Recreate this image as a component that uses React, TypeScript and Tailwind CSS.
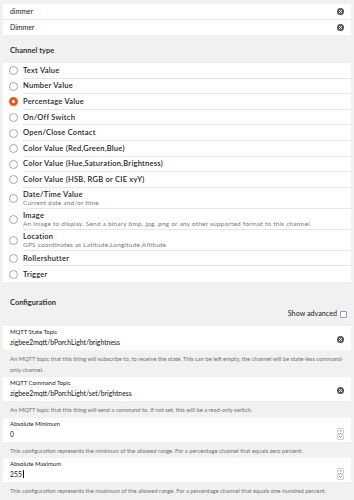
import React from 'react';

const channelTypes: { label: string; sub?: string; checked?: boolean }[] = [
  { label: 'Text Value' },
  { label: 'Number Value' },
  { label: 'Percentage Value', checked: true },
  { label: 'On/Off Switch' },
  { label: 'Open/Close Contact' },
  { label: 'Color Value (Red,Green,Blue)' },
  { label: 'Color Value (Hue,Saturation,Brightness)' },
  { label: 'Color Value (HSB, RGB or CIE xyY)' },
  { label: 'Date/Time Value', sub: 'Current date and/or time' },
  {
    label: 'Image',
    sub: 'An image to display. Send a binary bmp, jpg, png or any other supported format to this channel.',
  },
  { label: 'Location', sub: 'GPS coordinates as Latitude,Longitude,Altitude' },
  { label: 'Rollershutter' },
  { label: 'Trigger' },
];

function ClearIcon() {
  return (
    <svg width="7" height="7" viewBox="0 0 14 14" className="shrink-0">
      <circle cx="7" cy="7" r="7" fill="#555" />
      <path d="M4.5 4.5l5 5M9.5 4.5l-5 5" stroke="#fff" strokeWidth="1.8" strokeLinecap="round" />
    </svg>
  );
}

function Spinner() {
  return (
    <svg width="7" height="12" viewBox="0 0 14 24" className="shrink-0">
      <rect x="0.75" y="0.75" width="12.5" height="10.5" rx="2.5" fill="none" stroke="#aaa" strokeWidth="1.3" />
      <rect x="0.75" y="12.75" width="12.5" height="10.5" rx="2.5" fill="none" stroke="#aaa" strokeWidth="1.3" />
      <path d="M4.5 7.2L7 4.2l2.5 3" fill="none" stroke="#666" strokeWidth="1.4" />
      <path d="M4.5 16.2L7 19.2l2.5-3" fill="none" stroke="#666" strokeWidth="1.4" />
    </svg>
  );
}

function Radio({ checked }: { checked?: boolean }) {
  if (checked) {
    return <span className="block w-[9px] h-[9px] rounded-full border-[3px] border-[#ee5522] bg-white" />;
  }
  return <span className="block w-[9px] h-[9px] rounded-full border border-[#a8a8a8] bg-white" />;
}

function ConfigField({
  label,
  value,
  desc,
  number,
  cursor,
}: {
  label: string;
  value: string;
  desc: string[];
  number?: boolean;
  cursor?: boolean;
}) {
  return (
    <div>
      <div className="mx-[3px] h-[24px] bg-white pl-[7px] pr-[7px] pt-[2px] flex items-start">
        <div className="flex-1 min-w-0">
          <div className="text-[6px] leading-[8px] text-[#222]">{label}</div>
          <div className="text-[6.8px] leading-[12px] text-[#111] flex items-center">
            {value}
            {cursor && <span className="inline-block w-px h-[8px] bg-[#111] ml-px" />}
          </div>
        </div>
        <div className="pt-[8px]">{number ? <Spinner /> : <ClearIcon />}</div>
      </div>
      <div className="px-[10px] pt-[3px] pb-[2.5px] text-[5.8px] leading-[11px] text-[#707070]">
        {desc.map((d) => (
          <div key={d} className="whitespace-nowrap">
            {d}
          </div>
        ))}
      </div>
    </div>
  );
}

export default function App() {
  return (
    <div className="w-[354px] h-[500px] overflow-hidden bg-[#f1f1f1] font-['Lato','Liberation_Sans',sans-serif] text-[#222]">
      {/* name / label inputs */}
      <div className="pt-[4px]">
        <div className="mx-[3px] bg-white">
          <div className="h-[16px] flex items-center pl-[7px] pr-[7px] border-b border-[#e6e6e6]">
            <span className="flex-1 text-[6.9px]">dimmer</span>
            <ClearIcon />
          </div>
          <div className="h-[15px] flex items-center pl-[7px] pr-[7px]">
            <span className="flex-1 text-[6.9px]">Dimmer</span>
            <ClearIcon />
          </div>
        </div>
      </div>

      <div className="pl-[10px] pt-[11px] h-[28px] text-[7.5px] leading-[10px] font-bold text-[#333]">
        Channel type
      </div>

      {/* channel type radio list */}
      <div className="mx-[3px] bg-white">
        {channelTypes.map((t, i) => (
          <div key={t.label} className={`flex ${t.sub ? 'h-[21px]' : 'h-[15.6px]'}`}>
            <div className="w-[20px] shrink-0 flex items-center pl-[6px]">
              <Radio checked={t.checked} />
            </div>
            <div
              className={`flex-1 min-w-0 flex flex-col justify-center ${
                i < channelTypes.length - 1 ? 'border-b border-[#e6e6e6]' : ''
              }`}
            >
              <div className="text-[7.5px] leading-[9px] tracking-[0.25px] font-semibold text-[#222] whitespace-nowrap">
                {t.label}
              </div>
              {t.sub && (
                <div className="text-[6.5px] leading-[7px] tracking-[0.2px] text-[#777] whitespace-nowrap overflow-hidden">
                  {t.sub}
                </div>
              )}
            </div>
          </div>
        ))}
      </div>

      <div className="pl-[10px] pt-[16px] h-[27px] text-[7.5px] leading-[10px] font-bold text-[#333]">
        Configuration
      </div>
      <div className="h-[17px] pr-[7px] flex items-start justify-end gap-[3px]">
        <span className="text-[7.2px] leading-[10px] text-[#222]">Show advanced</span>
        <span className="mt-[2px] block w-[7px] h-[7px] rounded-[1px] border border-[#999] bg-white" />
      </div>

      <ConfigField
        label="MQTT State Topic"
        value="zigbee2mqtt/bPorchLight/brightness"
        desc={[
          'An MQTT topic that this thing will subscribe to, to receive the state. This can be left empty, the channel will be state-less command-',
          'only channel.',
        ]}
      />
      <ConfigField
        label="MQTT Command Topic"
        value="zigbee2mqtt/bPorchLight/set/brightness"
        desc={['An MQTT topic that this thing will send a command to. If not set, this will be a read-only switch.']}
      />
      <ConfigField
        label="Absolute Minimum"
        value="0"
        number
        desc={['This configuration represents the minimum of the allowed range. For a percentage channel that equals zero percent.']}
      />
      <ConfigField
        label="Absolute Maximum"
        value="255"
        number
        cursor
        desc={[
          'This configuration represents the maximum of the allowed range. For a percentage channel that equals one-hundred percent.',
        ]}
      />
    </div>
  );
}
